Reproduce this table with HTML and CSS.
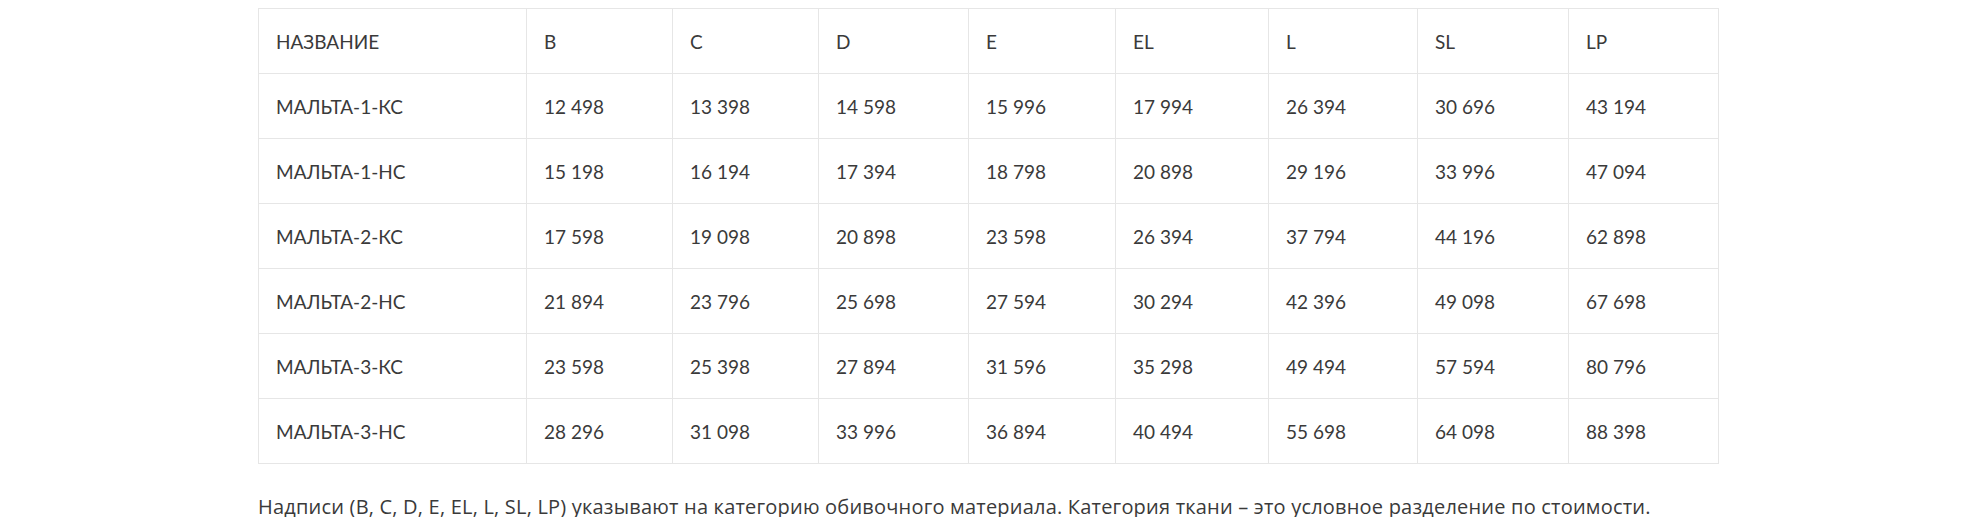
FILE: index.html
```html
<!DOCTYPE html>
<html lang="ru">
<head>
<meta charset="utf-8">
<link rel="stylesheet" href="styles.css">
</head>
<body>
<div class="wrap">
<table class="prices">
<colgroup>
<col class="c-name"><col class="c146"><col class="c146"><col class="c150"><col class="c147"><col class="c153"><col class="c149"><col class="c151"><col class="c150">
</colgroup>
<tr><td>НАЗВАНИЕ</td><td>B</td><td>C</td><td>D</td><td>E</td><td>EL</td><td>L</td><td>SL</td><td>LP</td></tr>
<tr><td>МАЛЬТА-1-КС</td><td>12 498</td><td>13 398</td><td>14 598</td><td>15 996</td><td>17 994</td><td>26 394</td><td>30 696</td><td>43 194</td></tr>
<tr><td>МАЛЬТА-1-НС</td><td>15 198</td><td>16 194</td><td>17 394</td><td>18 798</td><td>20 898</td><td>29 196</td><td>33 996</td><td>47 094</td></tr>
<tr><td>МАЛЬТА-2-КС</td><td>17 598</td><td>19 098</td><td>20 898</td><td>23 598</td><td>26 394</td><td>37 794</td><td>44 196</td><td>62 898</td></tr>
<tr><td>МАЛЬТА-2-НС</td><td>21 894</td><td>23 796</td><td>25 698</td><td>27 594</td><td>30 294</td><td>42 396</td><td>49 098</td><td>67 698</td></tr>
<tr><td>МАЛЬТА-3-КС</td><td>23 598</td><td>25 398</td><td>27 894</td><td>31 596</td><td>35 298</td><td>49 494</td><td>57 594</td><td>80 796</td></tr>
<tr><td>МАЛЬТА-3-НС</td><td>28 296</td><td>31 098</td><td>33 996</td><td>36 894</td><td>40 494</td><td>55 698</td><td>64 098</td><td>88 398</td></tr>
</table>
<p class="note">Надписи (B, C, D, E, EL, L, SL, LP) указывают на категорию обивочного материала. Категория ткани – это условное разделение по стоимости.</p>
</div>
</body>
</html>
```

FILE: styles.css
```css
html, body {
  margin: 0;
  padding: 0;
  background: #ffffff;
}
body {
  padding-top: 8px;
  font-family: "Lato", "Noto Sans", sans-serif;
  color: #333333;
}
.wrap {
  width: 1460px;
  margin: 0 auto;
}
.prices {
  width: 1460px;
  border-collapse: collapse;
  table-layout: fixed;
}
.c-name { width: 268px; }
.c146 { width: 146px; }
.c147 { width: 147px; }
.c149 { width: 149px; }
.c150 { width: 150px; }
.c151 { width: 151px; }
.c153 { width: 153px; }
.prices td {
  border: 1px solid #e6e6e6;
  height: 64px;
  padding: 0 0 0 17px;
  font-size: 19px;
  line-height: 1;
  vertical-align: middle;
  color: #3a3a3a;
  white-space: nowrap;
}
.note {
  margin: 33px 0 0 0;
  font-family: "Open Sans", "Noto Sans", sans-serif;
  font-size: 20px;
  letter-spacing: 0.2px;
  line-height: 1;
  color: #3a3a3a;
  white-space: nowrap;
}
```
